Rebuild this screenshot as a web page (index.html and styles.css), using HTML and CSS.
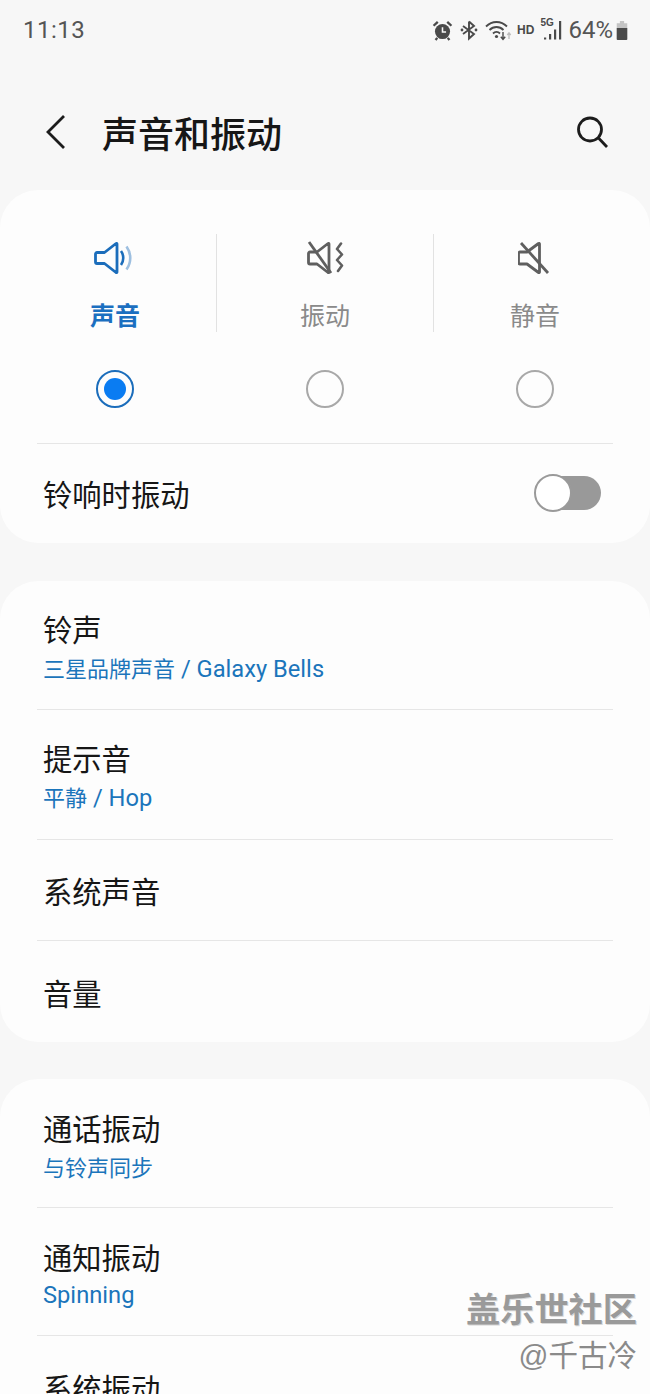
FILE: index.html
```html
<!DOCTYPE html>
<html lang="zh-CN">
<head>
    <meta charset="UTF-8">
    <meta name="viewport" content="width=device-width, initial-scale=1.0">
    <title>声音和振动</title>
    <link rel="stylesheet" href="styles.css">
</head>
<body>
<div class="screen">

    <div class="status-bar">
        <span class="clock">11:13</span>
        <div class="status-icons">
            <svg class="ic-alarm" width="21" height="21" viewBox="0 0 20 20">
                <circle cx="10" cy="11" r="7.200" fill="#4a4a4a"/>
                <path d="M10 7v4.400h3.400" fill="none" stroke="#f7f7f7" stroke-width="1.500"/>
                <path d="M1.500 5.500 5.500 1.800M18.500 5.500 14.500 1.800M5 17l-1.600 2M15 17l1.600 2" stroke="#4a4a4a" stroke-width="2.200" fill="none"/>
            </svg>
            <svg class="ic-bt" width="18" height="22" viewBox="0 0 18 20">
                <path d="M9 1.500v17l5-4.500L3 6M9 1.500l5 4.500L3 14" fill="none" stroke="#4a4a4a" stroke-width="1.900"/>
                <circle cx="2" cy="10" r="1.400" fill="#4a4a4a"/>
                <circle cx="16" cy="10" r="1.400" fill="#4a4a4a"/>
            </svg>
            <svg class="ic-wifi" width="27" height="22" viewBox="0 0 27 22">
                <path d="M1 7.500C7 1.500 16 1.500 22 7.500M4.500 11C8.500 7 14.500 7 18.500 11M8 14.500c2-2 5-2 7 0" fill="none" stroke="#4a4a4a" stroke-width="1.800"/>
                <circle cx="11.500" cy="17.500" r="1.600" fill="#4a4a4a"/>
                <path d="M18 13v7M15.800 17.800 18 20.400l2.200-2.600" fill="none" stroke="#4a4a4a" stroke-width="1.400"/>
                <path d="M24 20v-6M22.300 16l1.700-2.200 1.700 2.200" fill="none" stroke="#bdbdbd" stroke-width="1.300"/>
            </svg>
            <span class="hd">HD</span>
            <div class="signal">
                <span class="five-g">5G</span>
                <svg width="22" height="22" viewBox="0 0 22 22">
                    <path d="M2 18.500h2.200v2H2zM7 15h2.200v5.500H7zM12 10.500h2.200v10H12zM17 2h2.200v18.500H17z" fill="#4a4a4a"/>
                </svg>
            </div>
            <span class="battery-text">64%</span>
            <svg class="ic-battery" width="14" height="21" viewBox="0 0 12 20">
                <path d="M4 1h4v2h3v16H1V3h3z" fill="#c4c4c4"/>
                <path d="M1 7.500h10V18a1 1 0 0 1-1 1H2a1 1 0 0 1-1-1z" fill="#4a4a4a"/>
            </svg>
        </div>
    </div>

    <div class="title-bar">
        <svg class="back" width="22" height="36" viewBox="0 0 22 36">
            <path d="M19 2 3 18l16 16" fill="none" stroke="#1c1c1c" stroke-width="2.800"/>
        </svg>
        <h1>声音和振动</h1>
        <svg class="search" width="34" height="34" viewBox="0 0 34 34">
            <circle cx="15" cy="14.500" r="11.500" fill="none" stroke="#1c1c1c" stroke-width="2.800"/>
            <path d="m23.500 23 8.500 9" fill="none" stroke="#1c1c1c" stroke-width="2.800"/>
        </svg>
    </div>

    <div class="card card-modes">
        <div class="modes">
            <div class="mode active">
                <svg width="42" height="36" viewBox="0 0 42 36">
                    <path d="M3 12.500h7.500L22 3.500a.6.6 0 0 1 1 .4v28.200a.6.6 0 0 1-1 .4l-11.500-9H3a1.500 1.500 0 0 1-1.500-1.500v-8a1.500 1.500 0 0 1 1.500-1.500z" fill="none" stroke="#1b6dbb" stroke-width="2.800" stroke-linejoin="round"/>
                    <path d="M27 11c3 4 3 10 0 14" fill="none" stroke="#1b6dbb" stroke-width="2.600"/>
                    <path d="M32.500 6.500c5 7 5 16 0 23" fill="none" stroke="#9dbfe0" stroke-width="2.600"/>
                </svg>
                <span>声音</span>
            </div>
            <div class="mode">
                <svg width="38" height="36" viewBox="-1 0 38 36">
                    <path d="M3 12h7L21 3.500a.6.6 0 0 1 1 .4v28.200a.6.6 0 0 1-1 .4L10 24H3a1.500 1.500 0 0 1-1.500-1.500v-9A1.500 1.500 0 0 1 3 12z" fill="none" stroke="#5f5f5f" stroke-width="2.800" stroke-linejoin="round"/>
                    <path d="M2 2 24 33" stroke="#5f5f5f" stroke-width="2.800"/>
                    <path d="M34 3.500 30 9l5 5.500-5 5.500 5 5.500-4 5.500" fill="none" stroke="#5f5f5f" stroke-width="2.600" stroke-linecap="round" stroke-linejoin="round"/>
                </svg>
                <span>振动</span>
            </div>
            <div class="mode">
                <svg width="34" height="36" viewBox="1 0 34 36">
                    <path d="M3 12h7L21.500 3.500a.6.6 0 0 1 1 .4v28.200a.6.6 0 0 1-1 .4L10 24H3a1.500 1.500 0 0 1-1.500-1.500v-9A1.500 1.500 0 0 1 3 12z" fill="none" stroke="#5f5f5f" stroke-width="2.800" stroke-linejoin="round"/>
                    <path d="M4 3 31 33" stroke="#5f5f5f" stroke-width="2.800"/>
                </svg>
                <span>静音</span>
            </div>
        </div>
        <div class="radios">
            <div class="radio-cell"><span class="radio checked"></span></div>
            <div class="radio-cell"><span class="radio"></span></div>
            <div class="radio-cell"><span class="radio"></span></div>
        </div>
        <div class="row row-toggle">
            <span class="row-title">铃响时振动</span>
            <span class="toggle"><span class="thumb"></span></span>
        </div>
    </div>

    <div class="card">
        <div class="row row-sub">
            <span class="row-title">铃声</span>
            <span class="row-value"><span class="cjk">三星品牌声音</span> / Galaxy Bells</span>
        </div>
        <div class="row row-sub">
            <span class="row-title">提示音</span>
            <span class="row-value"><span class="cjk">平静</span> / Hop</span>
        </div>
        <div class="row row-plain"><span class="row-title">系统声音</span></div>
        <div class="row row-plain"><span class="row-title">音量</span></div>
    </div>

    <div class="card card-short">
        <div class="row row-sub">
            <span class="row-title">通话振动</span>
            <span class="row-value"><span class="cjk">与铃声同步</span></span>
        </div>
        <div class="row row-sub">
            <span class="row-title">通知振动</span>
            <span class="row-value">Spinning</span>
        </div>
        <div class="row row-plain"><span class="row-title">系统振动</span></div>
    </div>

    <div class="watermark">
        <div class="wm-name">盖乐世社区</div>
        <div class="wm-user">@千古冷</div>
    </div>
</div>
</body>
</html>
```

FILE: styles.css
```css
* {
    box-sizing: border-box;
}
body {
    margin: 0;
    background-color: #f7f7f7;
    font-family: "Noto Sans CJK SC", "Roboto", sans-serif;
    color: #161616;
}
.screen {
    position: relative;
    width: 650px;
    height: 1394px;
    overflow: hidden;
}
.status-bar {
    display: flex;
    justify-content: space-between;
    align-items: center;
    height: 60px;
    padding: 0 21px 0 23px;
    color: #555;
}
.clock {
    font-family: Roboto, sans-serif;
    font-size: 24px;
    letter-spacing: 0.5px;
}
.status-icons {
    display: flex;
    align-items: center;
}
.ic-bt {
    margin-left: 7px;
}
.ic-wifi {
    margin-left: 7px;
}
.hd {
    margin-left: 5px;
    font-family: "Liberation Sans", sans-serif;
    font-size: 12px;
    font-weight: bold;
    color: #4a4a4a;
}
.signal {
    position: relative;
    width: 22px;
    height: 22px;
    margin-left: 8px;
}
.five-g {
    position: absolute;
    left: -2px;
    top: -2px;
    font-family: "Liberation Sans", sans-serif;
    font-size: 10px;
    font-weight: bold;
    color: #4a4a4a;
}
.battery-text {
    margin-left: 4px;
    font-family: Roboto, sans-serif;
    font-size: 24px;
    color: #555;
}
.ic-battery {
    margin-left: 2px;
}
.title-bar {
    display: flex;
    align-items: center;
    height: 130px;
    padding: 14px 41px 0 45px;
}
.title-bar h1 {
    flex: 1;
    margin: 0 0 0 35px;
    font-size: 36px;
    font-weight: 500;
    line-height: 1;
}
.card {
    margin-bottom: 37px;
    padding: 0 37px;
    background-color: #fdfdfd;
    border-radius: 38px;
}
.card-modes {
    margin-bottom: 38px;
}
.modes {
    display: grid;
    grid-template-columns: 180px 217px 202px;
    padding-top: 44px;
}
.mode {
    display: flex;
    flex-direction: column;
    align-items: center;
    height: 98px;
    border-right: 1px solid #e2e2e2;
    font-size: 25px;
    line-height: 36px;
    color: #8a8a8a;
}
.mode:first-child {
    padding-right: 23px;
}
.mode:last-child {
    border-right: none;
}
.mode svg {
    flex: none;
    margin-top: 6px;
    margin-bottom: 20px;
}
.mode.active {
    color: #1b6fc0;
    font-weight: 700;
}
.radios {
    display: grid;
    grid-template-columns: 179px 217px 204px;
    height: 112px;
    padding-top: 38px;
    border-bottom: 1px solid #e6e6e6;
}
.radio-cell {
    display: flex;
    justify-content: center;
}
.radio-cell:first-child {
    padding-right: 23px;
}
.radio {
    display: flex;
    align-items: center;
    justify-content: center;
    width: 38px;
    height: 38px;
    background-color: #fdfdfd;
    border: 2px solid #a8a8a8;
    border-radius: 50%;
}
.radio.checked {
    border-color: #1b6dbb;
}
.radio.checked::after {
    content: "";
    width: 22px;
    height: 22px;
    background-color: #0a7cf2;
    border-radius: 50%;
}
.row {
    display: flex;
    padding: 0 6px;
    border-bottom: 1px solid #e6e6e6;
}
.card > .row:last-child {
    border-bottom: none;
}
.row-title {
    font-size: 29.300px;
    line-height: 40px;
}
.row-value {
    font-family: Roboto, "Noto Sans CJK SC", sans-serif;
    font-size: 23.700px;
    line-height: 32px;
    color: #1b75bb;
}
.cjk {
    font-family: "Noto Sans CJK SC", sans-serif;
    font-size: 22px;
}
.row-sub {
    flex-direction: column;
    justify-content: center;
    height: 129px;
    padding-top: 2px;
    gap: 3px;
}
.row-sub + .row-sub {
    height: 130px;
}
.card-short .row-sub {
    padding-top: 4px;
}
.card-short .row-sub + .row-sub {
    height: 128px;
}
.row-plain {
    align-items: center;
    height: 101px;
}
.row-toggle {
    align-items: center;
    justify-content: space-between;
    height: 99px;
    padding-right: 12px;
    padding-bottom: 2px;
}
.toggle {
    display: flex;
    align-items: center;
    width: 66px;
    height: 34px;
    background-color: #999;
    border-radius: 17px;
}
.thumb {
    width: 38px;
    height: 38px;
    margin-left: -1px;
    background-color: #fff;
    border: 2px solid #9a9a9a;
    border-radius: 50%;
}
.watermark {
    position: absolute;
    right: 13px;
    bottom: 18px;
    text-align: right;
}
.wm-name {
    margin-bottom: 9px;
    font-size: 34.200px;
    font-weight: 700;
    line-height: 40px;
    color: #9a9a9a;
    text-shadow: 1px 1px 0 #d8d8d8;
}
.wm-user {
    font-family: "Liberation Sans", "Noto Sans CJK SC", sans-serif;
    font-size: 29.500px;
    line-height: 40px;
    color: #8a8a8a;
}
```
